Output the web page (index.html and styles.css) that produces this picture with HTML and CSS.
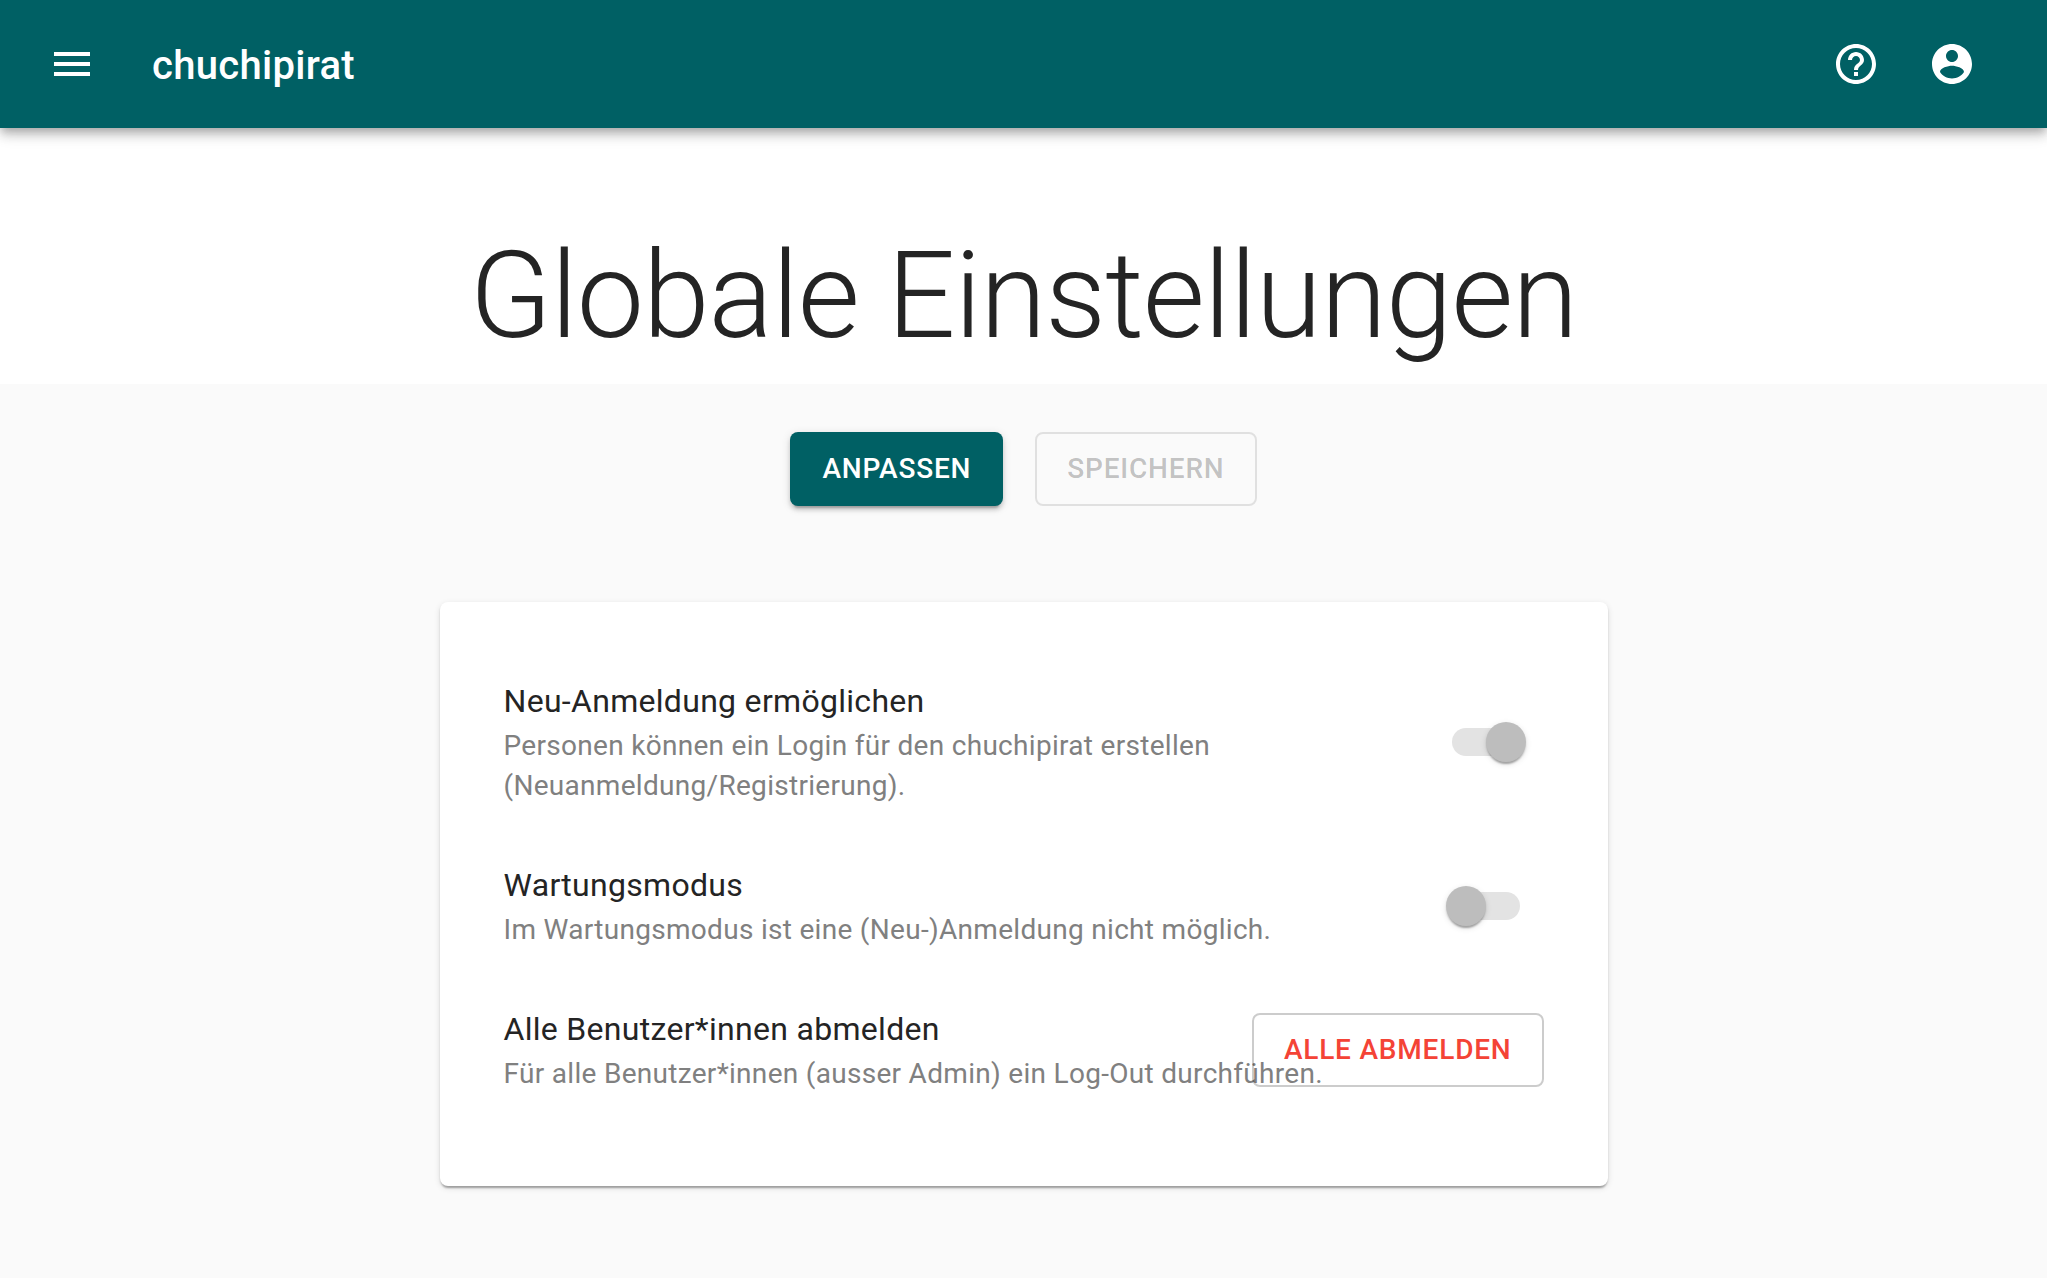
FILE: index.html
```html
<!DOCTYPE html>
<html lang="de">
<head>
  <meta charset="utf-8">
  <meta name="viewport" content="width=device-width, initial-scale=1">
  <title>Globale Einstellungen – chuchipirat</title>
  <link rel="stylesheet" href="styles.css">
</head>
<body>
  <header class="app-bar">
    <button class="icon-button" type="button" aria-label="Menü">
      <svg class="icon" viewBox="0 0 24 24" aria-hidden="true"><path d="M3 18h18v-2H3v2zm0-5h18v-2H3v2zm0-7v2h18V6H3z"/></svg>
    </button>
    <a class="brand" href="#">chuchipirat</a>
    <button class="icon-button" type="button" aria-label="Hilfe">
      <svg class="icon" viewBox="0 0 24 24" aria-hidden="true"><path d="M11 18h2v-2h-2v2zm1-16C6.480 2 2 6.480 2 12s4.480 10 10 10 10-4.480 10-10S17.520 2 12 2zm0 18c-4.410 0-8-3.590-8-8s3.590-8 8-8 8 3.590 8 8-3.590 8-8 8zm0-14c-2.210 0-4 1.790-4 4h2c0-1.100.9-2 2-2s2 .9 2 2c0 2-3 1.750-3 5h2c0-2.250 3-2.500 3-5 0-2.210-1.790-4-4-4z"/></svg>
    </button>
    <button class="icon-button" type="button" aria-label="Konto">
      <svg class="icon" viewBox="0 0 24 24" aria-hidden="true"><path d="M12 2C6.480 2 2 6.480 2 12s4.480 10 10 10 10-4.480 10-10S17.520 2 12 2zm0 3c1.660 0 3 1.340 3 3s-1.340 3-3 3-3-1.340-3-3 1.340-3 3-3zm0 14.200c-2.500 0-4.710-1.280-6-3.220.03-1.990 4-3.080 6-3.080 1.990 0 5.970 1.090 6 3.080-1.290 1.940-3.500 3.220-6 3.220z"/></svg>
    </button>
  </header>

  <div class="hero">
    <h1 class="hero-title">Globale Einstellungen</h1>
  </div>

  <main class="content">
    <div class="actions">
      <button class="button button-primary" type="button">Anpassen</button>
      <button class="button button-outlined" type="button" disabled>Speichern</button>
    </div>

    <section class="card">
      <ul class="settings">
        <li class="setting">
          <div class="setting-text">
            <label class="setting-name" for="allow-sign-up">Neu-Anmeldung ermöglichen</label>
            <p class="setting-hint" id="allow-sign-up-hint">Personen können ein Login für den chuchipirat erstellen (Neuanmeldung/Registrierung).</p>
          </div>
          <input class="switch" type="checkbox" id="allow-sign-up" aria-describedby="allow-sign-up-hint" checked disabled>
        </li>
        <li class="setting">
          <div class="setting-text">
            <label class="setting-name" for="maintenance">Wartungsmodus</label>
            <p class="setting-hint" id="maintenance-hint">Im Wartungsmodus ist eine (Neu-)Anmeldung nicht möglich.</p>
          </div>
          <input class="switch" type="checkbox" id="maintenance" aria-describedby="maintenance-hint" disabled>
        </li>
        <li class="setting">
          <div class="setting-text">
            <span class="setting-name">Alle Benutzer*innen abmelden</span>
            <p class="setting-hint" id="sign-out-hint">Für alle Benutzer*innen (ausser Admin) ein Log-Out durchführen.</p>
          </div>
          <button class="button button-outlined button-danger" type="button" aria-describedby="sign-out-hint">Alle abmelden</button>
        </li>
      </ul>
    </section>
  </main>
</body>
</html>
```
FILE: styles.css
```css
:root {
  --teal: #006064;
  --text: #242424;
  --text-secondary: #808080;
}

* {
  box-sizing: border-box;
}

body {
  margin: 0;
  background: #fafafa;
  color: var(--text);
  font-family: Roboto, "Liberation Sans", sans-serif;
  font-size: 28px;
  line-height: 40px;
}

/* App bar */
.app-bar {
  position: relative;
  display: flex;
  align-items: center;
  min-height: 128px;
  padding: 0 47px 0 24px;
  background: var(--teal);
  color: #fff;
  box-shadow: 0 4px 8px -2px rgba(0, 0, 0, 0.2), 0 8px 10px rgba(0, 0, 0, 0.14), 0 2px 20px rgba(0, 0, 0, 0.12);
}

.icon-button {
  display: flex;
  padding: 24px;
  border: 0;
  border-radius: 50%;
  background: none;
  color: inherit;
  cursor: pointer;
}

.icon {
  width: 48px;
  height: 48px;
  fill: currentColor;
}

.brand {
  flex: 1;
  margin-left: 32px;
  padding-top: 4px;
  color: inherit;
  font-size: 40px;
  font-weight: 500;
  line-height: 64px;
  letter-spacing: 0.0075em;
  text-decoration: none;
}

/* Page title */
.hero {
  padding: 96px 32px 16px;
  background: #fff;
}

.hero-title {
  margin: 0;
  font-size: 120px;
  font-weight: 300;
  line-height: 144px;
  letter-spacing: -0.00833em;
  text-align: center;
}

/* Main content */
.content {
  max-width: 1232px;
  margin: 0 auto;
  padding: 48px 32px 92px;
}

.actions {
  display: flex;
  justify-content: center;
  gap: 32px;
  margin-bottom: 96px;
}

.button {
  padding: 12px 32px;
  border: 0;
  border-radius: 8px;
  background: none;
  font: 500 28px/50px Roboto, "Liberation Sans", sans-serif;
  letter-spacing: 0.02857em;
  text-transform: uppercase;
  cursor: pointer;
}

.button-primary {
  background: var(--teal);
  color: #fff;
  box-shadow: 0 6px 2px -4px rgba(0, 0, 0, 0.2), 0 4px 4px rgba(0, 0, 0, 0.14), 0 2px 10px rgba(0, 0, 0, 0.12);
}

.button-outlined {
  padding: 10px 30px;
  border: 2px solid rgba(0, 0, 0, 0.2);
}

.button-outlined:disabled {
  border-color: rgba(0, 0, 0, 0.1);
  color: rgba(0, 0, 0, 0.24);
  cursor: default;
}

.button-danger {
  color: #f44336;
}

/* Settings card */
.card {
  padding: 32px 32px 48px;
  border-radius: 8px;
  background: #fff;
  box-shadow: 0 4px 2px -2px rgba(0, 0, 0, 0.2), 0 2px 2px rgba(0, 0, 0, 0.14), 0 2px 6px rgba(0, 0, 0, 0.12);
}

.settings {
  margin: 0;
  padding: 16px 0;
  list-style: none;
}

/* Text and control share one grid cell, so long hints run under the control */
.setting {
  display: grid;
  align-items: center;
  padding: 16px 32px;
}

.setting > * {
  grid-area: 1 / 1;
}

.setting > .switch,
.setting > .button {
  justify-self: end;
}

.setting-text {
  padding: 12px 64px 12px 0;
}

.setting-name {
  display: block;
  margin-bottom: 2px;
  font-size: 32px;
  line-height: 46px;
  letter-spacing: 0.00938em;
}

.setting-hint {
  margin: 0;
  color: var(--text-secondary);
  letter-spacing: 0.01071em;
}

/* Switch */
.switch {
  appearance: none;
  display: grid;
  align-items: center;
  width: 116px;
  height: 76px;
  margin: 0;
  padding: 0 18px;
}

.switch::before,
.switch::after {
  content: "";
  grid-area: 1 / 1;
}

.switch::before {
  height: 28px;
  margin: 0 6px;
  border-radius: 14px;
  background: #e3e3e3;
}

.switch::after {
  width: 40px;
  height: 40px;
  border-radius: 50%;
  background: #bdbdbd;
  box-shadow: 0 4px 2px -2px rgba(0, 0, 0, 0.2), 0 2px 2px rgba(0, 0, 0, 0.14), 0 2px 6px rgba(0, 0, 0, 0.12);
}

.switch:checked::after {
  justify-self: end;
}
```
